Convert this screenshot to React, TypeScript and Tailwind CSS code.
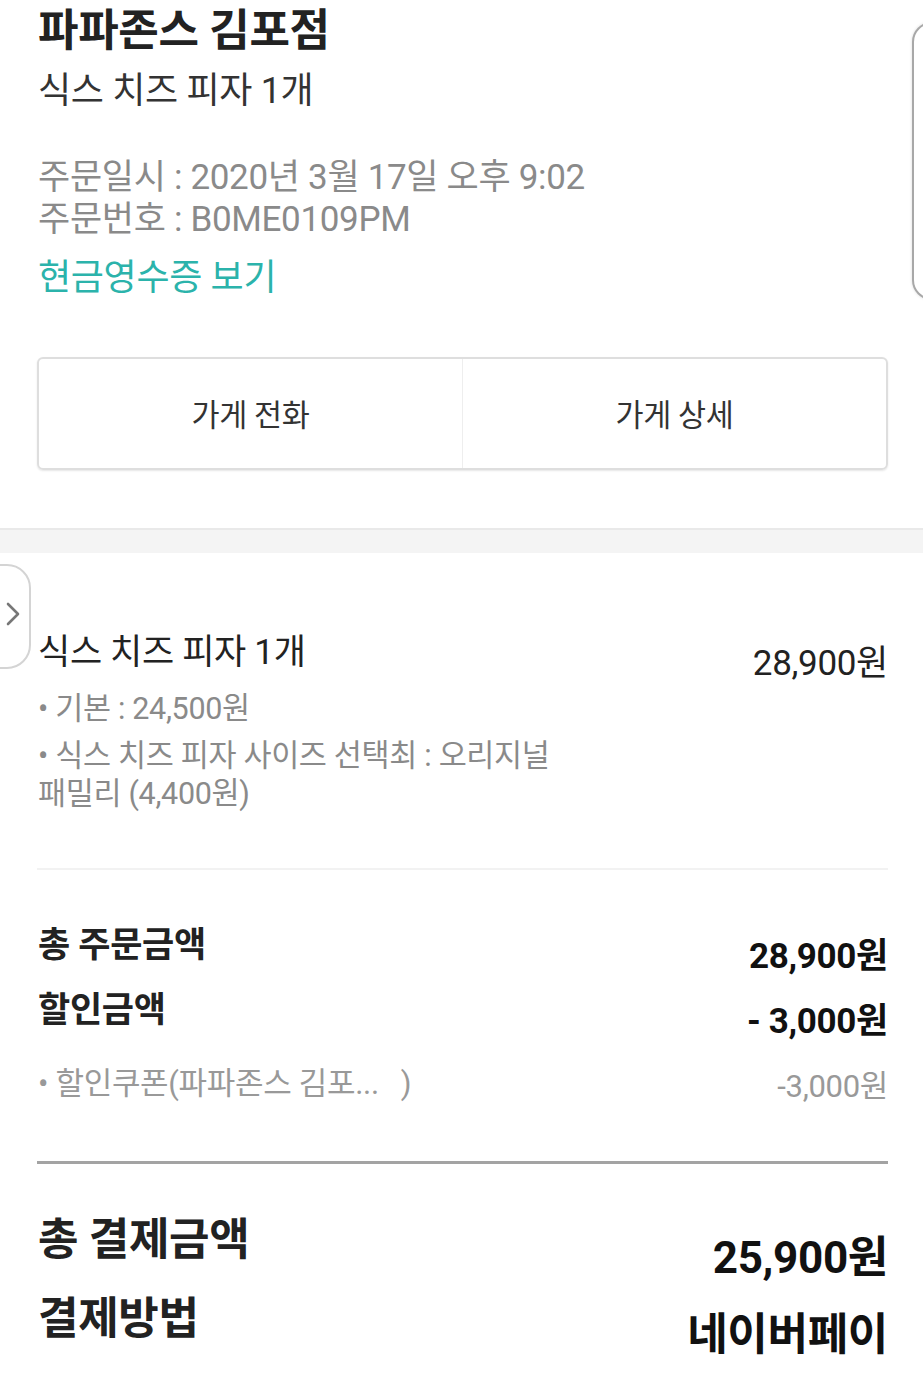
const font = "font-['Roboto','Noto_Sans_CJK_KR',sans-serif]";

const OrderDetail: React.FC = () => {
  return (
    <div className={`relative w-[923px] min-h-[1398px] bg-white overflow-hidden tracking-[-0.02em] ${font}`}>
      {/* Store header */}
      <div className="pt-[3px] pl-[38px] pr-[35px] pb-[58px]">
        <h1 className="text-[44px] leading-[56px] font-bold text-[#222]">파파존스 김포점</h1>
        <p className="mt-[10px] text-[36px] leading-[44px] text-[#333]">식스 치즈 피자 1개</p>
        <div className="mt-[44px] text-[35px] leading-[42px] text-[#8a8a8a]">
          <p>주문일시 : 2020년 3월 17일 오후 9:02</p>
          <p>주문번호 : B0ME0109PM</p>
        </div>
        <p className="mt-[15px] text-[36px] leading-[44px] text-[#2bb3ab]">현금영수증 보기</p>

        <div className="mt-[57px] -ml-px flex h-[113px] rounded-md border-2 border-[#dedede] shadow-[0_1px_2px_rgba(0,0,0,0.1)]">
          <button className="flex-1 flex items-center justify-center pt-[5px] text-[30.5px] text-[#333]">가게 전화</button>
          <div className="w-px bg-[#eeeeee]" />
          <button className="flex-1 flex items-center justify-center pt-[5px] text-[30.5px] text-[#333]">가게 상세</button>
        </div>
      </div>

      <div className="h-[25px] bg-[#f4f4f4] border-t-2 border-[#e9e9e9]" />

      {/* Menu item */}
      <div className="pl-[38px] pr-[35px]">
        <div className="mt-[78px] flex items-start justify-between">
          <div className="w-[540px]">
            <p className="text-[35px] leading-[44px] text-[#222]">식스 치즈 피자 1개</p>
            <p className="mt-[14px] text-[30.5px] leading-[40px] text-[#8a8a8a]">• 기본 : 24,500원</p>
            <p className="mt-[8px] text-[30.5px] leading-[38px] text-[#8a8a8a] break-keep">
              • 식스 치즈 피자 사이즈 선택최 : 오리지널 패밀리 (4,400원)
            </p>
          </div>
          <span className="mt-[11px] text-[35px] leading-[44px] text-[#222]">28,900원</span>
        </div>

        <div className="mt-[55px] -ml-px h-[2px] bg-[#f2f2f2]" />

        {/* Totals */}
        <div className="mt-[52px] h-[48px] flex items-start justify-between">
          <span className="text-[35px] leading-[48px] font-bold text-[#222]">총 주문금액</span>
          <span className="mt-[11px] text-[35px] leading-[48px] font-bold text-[#111]">28,900원</span>
        </div>
        <div className="mt-[17px] h-[48px] flex items-start justify-between">
          <span className="text-[35px] leading-[48px] font-bold text-[#222]">할인금액</span>
          <span className="mt-[11px] text-[35px] leading-[48px] font-bold text-[#111]">- 3,000원</span>
        </div>
        <div className="mt-[29px] h-[40px] flex items-start justify-between text-[31px] leading-[40px] text-[#999]">
          <span>• 할인쿠폰(파파존스 김포...&nbsp;&nbsp;&nbsp;)</span>
          <span className="mt-[3px]">-3,000원</span>
        </div>

        <div className="mt-[57px] -ml-px h-[3px] bg-[#a3a3a3]" />

        <div className="mt-[48px] h-[56px] flex items-start justify-between">
          <span className="text-[44px] leading-[56px] font-bold text-[#222]">총 결제금액</span>
          <span className="mt-[18px] text-[44px] leading-[56px] font-bold text-[#111]">25,900원</span>
        </div>
        <div className="mt-[23px] h-[56px] flex items-start justify-between">
          <span className="text-[44px] leading-[56px] font-bold text-[#222]">결제방법</span>
          <span className="mt-[16px] text-[44px] leading-[56px] font-bold text-[#111]">네이버페이</span>
        </div>
      </div>

      {/* Edge panel handles */}
      <div className="absolute left-[912px] top-[22px] w-[40px] h-[278px] rounded-[22px] border-2 border-[#a8a8a8] bg-white shadow-[0_0_3px_rgba(0,0,0,0.15)]" />
      <div className="absolute left-[-20px] top-[564px] w-[51px] h-[105px] rounded-r-[24px] border-2 border-[#d4d4d4] bg-white flex items-center justify-end pr-[9px]">
        <svg width="14" height="24" viewBox="0 0 14 24" fill="none" className="mb-[6px]">
          <path d="M2 2l10 10-10 10" stroke="#777" strokeWidth="2.6" strokeLinecap="round" strokeLinejoin="round" />
        </svg>
      </div>
    </div>
  );
};

export default function App() {
  return <OrderDetail />;
}
